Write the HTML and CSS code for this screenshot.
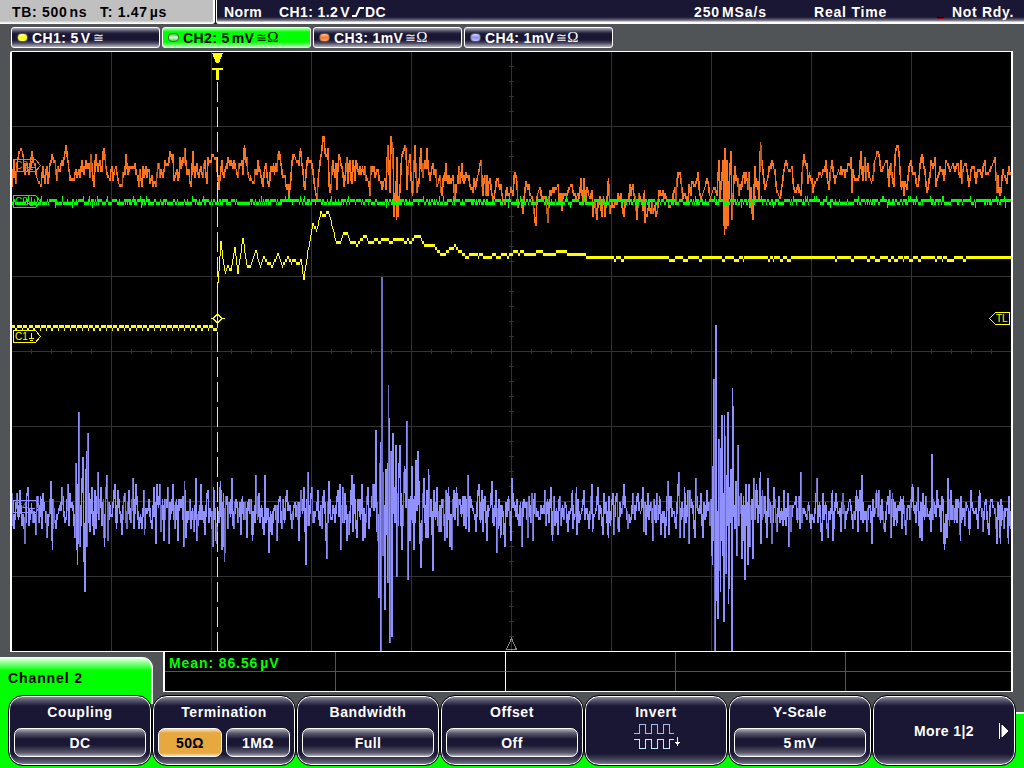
FILE: index.html
```
<!DOCTYPE html>
<html lang="en">

<head>
    <meta charset="UTF-8">
    <meta name="viewport" content="width=device-width, initial-scale=1.0">
    <title>Oscilloscope</title>
    <link rel="stylesheet" href="styles.css">
</head>

<body>

    <header class="status">
        <div class="timebase">
            <span class="tb">TB: 500<i></i>ns</span>
            <span class="tpos">T: 1.47<i></i>µs</span>
        </div>
        <div class="trigger">
            <span class="mode">Norm</span>
            <span class="source">CH1: 1.2<i></i>V</span>
            <svg class="edge" width="13" height="12" viewBox="0 0 13 12"><path d="M0 10H4L7.5 2H12" /></svg>
            <span class="dc">DC</span>
            <span class="rate">250<i></i>MSa/s</span>
            <span class="acq">Real Time</span>
            <span class="led"></span>
            <span class="state">Not Rdy.</span>
        </div>
    </header>

    <nav class="channels">
        <div class="channel"><b class="dot yellow"></b><span>CH1: 5<i></i>V</span><em>≅</em></div>
        <div class="channel active"><b class="dot green"></b><span>CH2: 5<i></i>mV</span><em>≅</em><em class="ohm">Ω</em></div>
        <div class="channel"><b class="dot orange"></b><span>CH3: 1mV</span><em>≅</em><em class="ohm">Ω</em></div>
        <div class="channel"><b class="dot violet"></b><span>CH4: 1mV</span><em>≅</em><em class="ohm">Ω</em></div>
    </nav>

    <main class="screen">
        <svg class="plot" width="999" height="599" viewBox="12 52 999 599">
            <path id="grid" class="grid" />
            <path class="ref" d="M511.5 638.5L506.5 649.5H516.5Z" />
            <path id="ch4" class="ch4" />
            <path id="ch4dim" class="ch4 dim" />
            <path id="ch3" class="ch3" />
            <path id="ch3dim" class="ch3 dim" />
            <path id="ch2" class="ch2" />
            <path id="ch1" class="ch1" />

            <!-- trigger position -->
            <path class="cursor" d="M217.5 82V651" />
            <path class="fill1" d="M212 53H223L219 63H216ZM212 68H223V70H219V80H216V70H212Z" />
            <path class="mark1" d="M210.5 318.5H213L217.5 314L222 318.5L217.5 323L213 318.5M222 318.5H225" />

            <!-- channel markers -->
            <g class="mark3">
                <path d="M13.5 159.5H35.5L40.5 165.5L35.5 171.5H13.5Z" />
                <text x="15" y="169">C3</text>
                <path d="M31.5 161V167M28 167.5H35M30 169.5H33" />
            </g>
            <g class="mark2">
                <path d="M13.5 195.5H35.5L40.5 201.5L35.5 207.5H13.5Z" />
                <text x="15" y="205">C2</text>
                <path d="M31.5 197V203M28 203.5H35M30 205.5H33" />
            </g>
            <g class="mark1">
                <path d="M13.5 330.5H35.5L40.5 336.5L35.5 342.5H13.5Z" />
                <text x="15" y="340">C1</text>
                <path d="M31.5 333V338M29 338.5H34M30 340.5H33" />
            </g>
            <g class="mark4">
                <path d="M13.5 500.5H35.5L40.5 506.5L35.5 512.5H13.5Z" />
                <text x="15" y="510">C4</text>
                <path d="M31.5 503V508M28 508.5H35M30 510.5H33" />
            </g>
            <g class="mark1">
                <path d="M1009.5 312.5H995.5L989.5 318.5L995.5 324.5H1009.5Z" />
                <text x="996" y="322">TL</text>
            </g>
        </svg>
    </main>

    <section class="info">
        <div class="tab">Channel 2</div>
        <div class="measure">
            <div>Mean: 86.56<i></i>µV</div><div></div><div></div><div></div><div></div>
            <div></div><div></div><div></div><div></div><div></div>
        </div>
    </section>

    <footer class="softkeys">
        <div class="key">
            <span class="title">Coupling</span>
            <div class="values"><span class="value">DC</span></div>
        </div>
        <div class="key">
            <span class="title">Termination</span>
            <div class="values"><span class="value on">50Ω</span><span class="value">1MΩ</span></div>
        </div>
        <div class="key">
            <span class="title">Bandwidth</span>
            <div class="values"><span class="value">Full</span></div>
        </div>
        <div class="key">
            <span class="title">Offset</span>
            <div class="values"><span class="value">Off</span></div>
        </div>
        <div class="key">
            <span class="title">Invert</span>
            <svg class="invert" width="48" height="26" viewBox="0 0 48 26">
                <path class="wave" d="M0 9.5H5.5V.5H11.5V9.5H17.5V.5H23.5V9.5H29.5V.5H35.5V9.5H40" />
                <path class="wave low" d="M0 15.5H5.5V24.5H11.5V15.5H17.5V24.5H23.5V15.5H29.5V24.5H35.5V15.5H40" />
                <path class="arrow" d="M43.5 13V22M41 18.5H46M42 19.5H45" />
            </svg>
        </div>
        <div class="key">
            <span class="title">Y-Scale</span>
            <div class="values"><span class="value">5<i></i>mV</span></div>
        </div>
        <div class="key more">
            <span>More 1|2</span>
            <svg width="10" height="16" viewBox="0 0 10 16"><path d="M.5 0V16" /><path class="tri" d="M3 2L9 8L3 14Z" /></svg>
        </div>
    </footer>

    <script src="script.js"></script>

</body>

</html>
```
FILE: styles.css
```
* {
    box-sizing: border-box;
}

body {
    margin: 0;
    width: 1024px;
    height: 768px;
    overflow: hidden;
    background: #505457;
    color: #fff;
    font-family: "Liberation Sans", Arial, sans-serif;
    font-size: 14px;
    font-weight: bold;
    letter-spacing: 0.4px;
    white-space: nowrap;
}

/* narrow gap between number and unit */
i {
    display: inline-block;
    width: 2px;
}

/* status line */
.status {
    display: flex;
    height: 24px;
    line-height: 24px;
    background: #1a1734;
}

.timebase {
    display: flex;
    width: 215px;
    padding-left: 12px;
    background: linear-gradient(#c0c0c0 21px, #ddd 22px, #fff 23px);
    border-right: 2px solid #fff;
    border-bottom-right-radius: 3px;
    color: #000;
    letter-spacing: 0.7px;
}

.tb {
    width: 88px;
}

.trigger {
    display: flex;
    flex: 1;
    margin-left: 1px;
    padding-left: 7px;
    border-left: 1px solid #fff;
    border-bottom-left-radius: 3px;
    background: linear-gradient(#1a1734 17px, #4a4760 19px, #908e9e 21px, #fff 22px);
}

.mode {
    width: 55px;
}

.source {
    width: 73px;
}

.edge {
    margin-top: 6px;
    fill: none;
    stroke: #fff;
    stroke-width: 2;
}

.dc {
    width: 329px;
}

.rate {
    width: 120px;
    letter-spacing: 0.9px;
}

.acq {
    width: 123px;
    letter-spacing: 0.8px;
}

.led {
    width: 7px;
    height: 2px;
    margin: 17px 8px 0 0;
    background: #a00010;
    border-top: 1px solid #000;
}

.state {
    letter-spacing: 0.7px;
}

/* channel buttons */
.channels {
    display: flex;
    gap: 2px;
    height: 27px;
    padding: 3px 0 0 11px;
}

.channel {
    display: flex;
    align-items: center;
    width: 149px;
    height: 21px;
    padding-left: 5px;
    border: 1px solid #fff;
    border-radius: 3px;
    background: linear-gradient(#aaa9b5, #3b3850 4px, #1a1734 6px, #1a1734 12px, #4a4760 15px, #b5b4c0);
}

.channel.active {
    background: linear-gradient(#b5ffb5, #0f0 4px, #0f0 14px, #b5ffb5);
    color: #000;
}

.channel em {
    margin-left: 2px;
    font: 13px "Liberation Serif", "DejaVu Serif", serif;
    letter-spacing: 0;
}

.channel .ohm {
    margin-left: 0;
    font-size: 15px;
}

.dot {
    width: 11px;
    height: 9px;
    margin-right: 4px;
    border: 1px solid #555;
    border-radius: 4px;
}

.yellow {
    background: linear-gradient(#ffffb0, #ff0 50%, #ffff60);
}

.green {
    background: linear-gradient(#40c040, #d8ffd8 50%, #40d040);
}

.orange {
    background: linear-gradient(#ffc0a0, #ff7820 50%, #ffa070);
}

.violet {
    background: linear-gradient(#d0d0ff, #9090ff 50%, #c0c0ff);
}

/* plot */
.screen {
    width: 1003px;
    height: 601px;
    margin-left: 10px;
    border: solid #fff;
    border-width: 1px 2px;
    border-top-left-radius: 2px;
    background: #000;
}

.plot {
    display: block;
    fill: none;
    shape-rendering: crispEdges;
}

.plot text {
    font-size: 10px;
    font-weight: normal;
    letter-spacing: 0;
    stroke: none;
}

.grid {
    stroke: #333;
}

.ref {
    stroke: #888;
}

.ch1 {
    stroke: #ff0;
}

.ch2 {
    stroke: #0f0;
}

.ch3 {
    stroke: #ff741a;
}

.ch3.dim {
    stroke: #c05a18;
}

.ch4 {
    stroke: #9090ff;
}

.ch4.dim {
    stroke: #6e6ec4;
}

.cursor {
    stroke: #ff0;
    stroke-dasharray: 20 5;
}

.fill1 {
    fill: #ff0;
}

.mark1 {
    stroke: #ff0;
}

.mark1 text {
    fill: #ff0;
}

.mark2 {
    stroke: #0f0;
}

.mark2 text {
    fill: #0f0;
}

.mark3 {
    stroke: #ff741a;
}

.mark3 text {
    fill: #ff741a;
}

.mark4 {
    stroke: #9090ff;
}

.mark4 text {
    fill: #9090ff;
}

/* menu name and measurement */
.info {
    display: flex;
    align-items: flex-end;
    gap: 10px;
    height: 40px;
    letter-spacing: 0.9px;
}

.tab {
    width: 153px;
    height: 35px;
    padding-left: 8px;
    line-height: 43px;
    border-right: 2px solid #fff;
    border-top-right-radius: 11px;
    background: linear-gradient(#fff, #b0ffb0 4px, #0f0 14px);
    color: #000;
}

.measure {
    display: grid;
    grid-template-columns: 171px 170px 170px 170px 1fr;
    grid-template-rows: 20px 19px;
    width: 850px;
    height: 40px;
    border: solid #fff;
    border-width: 0 2px 1px;
    background: #000;
    color: #0f0;
    line-height: 22px;
}

.measure div {
    padding-left: 4px;
    border-right: 1px solid #555;
}

.measure div:nth-child(-n+5) {
    border-bottom: 1px solid #555;
}

.measure div:nth-child(5n+2) {
    border-right-color: #fff;
}

.measure div:nth-child(5n) {
    border-right: 0;
}

/* softkeys */
.softkeys {
    display: flex;
    height: 76px;
    padding: 3px 0 0 8px;
    background:
        linear-gradient(#0f0, #0f0) 0 0 / 151px 100% no-repeat,
        linear-gradient(#fff, #fff) 151px 0 / 2px 12px no-repeat,
        linear-gradient(#0f0, #0f0) 0 100% / 100% 13px no-repeat,
        linear-gradient(#fff 2px, #0f0 2px) 1012px 20px / 12px 56px no-repeat;
}

.key {
    display: flex;
    flex-direction: column;
    align-items: center;
    width: 144px;
    height: 71px;
    padding-top: 6px;
    border: 1px solid #000;
    border-radius: 15px;
    box-shadow: inset 0 0 0 1px #fff;
    background: linear-gradient(#9a99a8, #5d5b70 4px, #1a1734 10px, #1a1734 58px, #5d5b70 66px, #9a99a8);
}

.title {
    height: 20px;
    line-height: 20px;
    letter-spacing: 0.6px;
}

.values {
    display: flex;
    gap: 4px;
    width: 132px;
    margin-top: 6px;
}

.value {
    flex: 1;
    height: 29px;
    line-height: 29px;
    border: 1px solid #fff;
    border-radius: 7px;
    background: linear-gradient(#b0afbc, #5d5b70 4px, #1a1734 10px, #1a1734 16px, #5d5b70 24px, #b0afbc);
    text-align: center;
}

.value.on {
    background: linear-gradient(#f8e0b8, #e8a840 4px, #e8a840 24px, #f8e0b8);
    color: #000;
}

.invert {
    margin: 2px 0 0 4px;
    fill: none;
    shape-rendering: crispEdges;
}

.wave {
    stroke: #a8b8f0;
}

.wave.low {
    stroke: #c0f0ff;
}

.arrow {
    stroke: #fff;
}

.more {
    flex-direction: row;
    justify-content: flex-end;
    gap: 25px;
    padding: 1px 6px 0 0;
}

.more svg {
    fill: none;
    stroke: #fff;
}

.more .tri {
    fill: #fff;
}
```
FILE: script.js
```
// Turning points of the traces, x then y, in screen pixels.
var ch4Points = [
    12,493, 14,528, 17,493, 20,490, 22,526, 25,543, 28,487, 33,523, 36,535, 38,496, 42,529, 43,493, 47,537, 51,481,
    52.5,550, 53,499, 56,528, 62,487, 65,523, 68,484, 69,525, 70,493, 75,538, 76,463, 77.5,565, 79,412, 80,547,
    83,457, 84,550, 85,592, 86.5,451, 87,547, 88,433, 90,531, 92,487, 94,535, 95,490, 96,528, 98,472, 99,519,
    101,487, 104.5,547, 107,475, 108,541, 112,517, 115,484, 116.5,529, 118,490, 122,535, 125,493, 127,528, 129,490,
    131,523, 133,478, 134,528, 136,484, 139,529, 142,528, 144,490, 144.5,534, 149,499, 152,528, 154,487, 156,544,
    157,484, 160,484, 161,532, 164,541, 168,487, 169,544, 173,484, 175,529, 178,541, 180,499, 184,547, 184.5,481,
    186,538, 190,499, 191,529, 194,532, 196,478, 197,541, 201,484, 205,535, 208,490, 213,547, 213.5,487, 216.5,544,
    220.5,481, 222,550, 223.5,493, 224.5,562, 227,496, 228,528, 232,478, 234,528, 237,502, 241,535, 245,502, 247,537,
    249,500, 252.5,541, 256,475, 259,494, 264,535, 265,475, 267,510, 269,553, 272,534, 277,541, 280,496, 282,529,
    287,490, 292,528, 295,502, 299,541, 301,490, 304,487, 306,565, 308,472, 309,526, 312,487, 314,523, 318,490,
    320,526, 322,529, 324,490, 327,559, 329,481, 332,519, 335,523, 338,490, 340,484, 341,550, 343,487, 344,523,
    345,493, 347,541, 349,535, 352,475, 353,532, 354,484, 357,538, 359,499, 362,484, 363,541, 365,538, 368,487,
    369,529, 373,484, 375,506, 376,430, 377,532, 379,598, 380.5,442, 381,651, 382,277, 383,556, 385,610, 386,469,
    388,583, 388.5,385, 390,643, 391,451, 392,637, 393,433, 395,523, 396,445, 397,577, 399,469, 400,445, 402,550,
    404.5,466, 407,421, 408,580, 410,541, 412,466, 414,550, 416,460, 418,451, 421,568, 424,478, 426,538, 427,490,
    428,538, 428.5,469, 430,517, 431,500, 433,571, 434,490, 437,487, 439,532, 441,532, 443,499, 445,541, 446,490,
    447,538, 448.5,487, 450,547, 452,550, 454,490, 456.5,487, 458,526, 460,499, 463,496, 465,496, 466,529, 468,475,
    469,532, 471,499, 476,532, 479,484, 482,490, 483,532, 485,496, 487,541, 488,505, 492,481, 494,526, 496,490,
    497,553, 500,505, 500.5,538, 502,506, 505,547, 506,502, 511,541, 512,478, 517,499, 519,526, 522,547, 524,499,
    528,538, 532,493, 533,541, 535,493, 540,520, 545,490, 546,526, 549,523, 551,487, 552.5,541, 554,496, 558,535,
    560,496, 565,502, 568,532, 572.5,490, 573,529, 576.5,487, 577,535, 584,490, 585,520, 589,529, 592,484,
    592.5,532, 598,487, 603,535, 604,493, 608.5,538, 609,496, 613,493, 614,535, 617,493, 619,532, 624,484,
    628,529, 633,493, 635,520, 638,493, 643,487, 644,532, 646,535, 648,493, 653,541, 657,493, 661,535, 665,538,
    668,481, 669,535, 671,496, 676,528, 679,472, 680,538, 683,510, 684,538, 684.5,487, 688,490, 689,544, 690,490,
    695,538, 696,478, 701,493, 703,538, 707,490, 709,502, 711,500, 712.5,565, 714,379, 715,651, 716,325, 717,592,
    718,619, 719,439, 720.5,592, 721,463, 722,415, 724,622, 724.5,415, 726,574, 728,412, 728.5,604, 731,469,
    732,651, 732.5,388, 735,529, 736,481, 737,556, 738,445, 739,526, 741,493, 742,559, 743.5,495, 745,580,
    746,484, 748,565, 749,484, 750,547, 752,500, 753,559, 754,478, 756.5,484, 758,523, 760.5,472, 761,544,
    762.5,490, 767,538, 768,478, 772,544, 774,487, 777,532, 779,496, 784,490, 786,526, 788,493, 789,547,
    791,532, 796,496, 799,496, 800,529, 801,472, 802,523, 807,520, 811,529, 816,499, 817,478, 822,541,
    823,493, 828,538, 832.5,490, 833,541, 836,493, 841,532, 843,493, 845,529, 850,499, 853,529, 856.5,490,
    858,532, 860,490, 862,475, 867,532, 870,505, 872,543, 873,499, 876.5,490, 879,490, 882,499, 885,532, 888,496,
    890,490, 891,538, 892.5,493, 898,505, 902,529, 906,535, 909,505, 912.5,484, 916,523, 918,487, 920,538,
    922,541, 923,493, 926,496, 931,532, 932,454, 933,520, 937,490, 941,532, 943,500, 944.5,550, 947,538, 948,478,
    951,490, 957,523, 960.5,541, 961,496, 965,526, 969.5,535, 971,490, 978,529, 979.5,490, 983,532, 986,499,
    989,535, 992,499, 997,544, 1000.5,544, 1001,499, 1004,529, 1008.5,544, 1009,496, 1011,530
];

var ch3Points = [
    12,187, 14,160, 16,184, 18,158, 21,148, 23,154, 25,175, 27,163, 29,176, 32,152, 35,163, 38,181, 41,187, 43,166,
    45,184, 47,166, 48,184, 51,160, 55,159, 57,181, 62,160, 63,166, 66,145, 69,170, 74,182, 76,170, 80,178, 82,160,
    84,175, 86,160, 90,178, 91,154, 94,187, 96,154, 98,172, 100,160, 102,172, 104,148, 107,175, 110,181, 112,166,
    113,181, 116,166, 119,184, 122,187, 126,154, 128,175, 131,169, 135,164, 139,187, 140,170, 142,187, 143,166,
    147,178, 149,169, 153,187, 157,176, 159,164, 160,178, 164,172, 169,160, 173,154, 174,182, 177,169, 179,178,
    185,148, 187,175, 189,170, 191,187, 193,151, 195,178, 197,164, 199,178, 201,166, 203,178, 205,160, 207,184,
    208,157, 211,164, 213,154, 216,158, 219,190, 222,160, 224,178, 228,157, 230,167, 234,160, 238,178, 242,160,
    243,175, 244.5,145, 248,175, 254,184, 258,160, 260,170, 263,187, 266,164, 269,187, 271,166, 277,172, 279,151,
    282,173, 285,176, 289,198, 292,163, 295,157, 299,166, 300.5,148, 303,170, 305,190, 308,157, 311,160, 314,180,
    317,198, 320,163, 322,148, 324,136, 326,158, 328,148, 329,184, 331,190, 333,160, 335,178, 336,163, 337,190,
    338,166, 340,157, 342,166, 344,187, 347,157, 348,184, 350,160, 352,184, 353,160, 355,181, 356,160, 359,176,
    365,166, 370,196, 371,166, 375,178, 378,169, 382,190, 385,178, 386,190, 388,145, 390,193, 391,136, 393,148,
    394,217, 396,181, 396.5,219, 397,157, 398,217, 400,190, 402,154, 405,145, 406,148, 407,190, 408,170, 410,154,
    411,178, 412.5,196, 415,145, 417,193, 419,184, 421,148, 423,178, 427,148, 430,181, 433,163, 437,187, 440,175,
    442,196, 446,163, 448,184, 453,175, 455,202, 459,166, 460,184, 462,163, 464,184, 466,172, 470,187, 472,187,
    473,193, 478,175, 481,160, 483,196, 485,175, 486,196, 487,175, 488,196, 490,178, 493,202, 496,184, 498,178,
    502,196, 505,204, 507,187, 509,196, 511,187, 513,196, 514.5,172, 517,181, 518,208, 521,200, 523,213, 526,181,
    530,196, 533,198, 536,226, 537,196, 540,187, 542,198, 546,200, 548,222, 550,190, 554,193, 556,187, 558,184,
    562,211, 563,193, 567,196, 570,187, 572,184, 575,193, 579,200, 581,178, 583,202, 584,178, 586,204, 587,187,
    590,198, 592,190, 593,217, 595,200, 597,220, 599,200, 600,196, 602,217, 604,200, 605,217, 607,200, 608.5,178,
    610,214, 612,200, 614,208, 618,193, 622,200, 624,217, 626,200, 629,198, 630,184, 631,196, 633,184, 635,198,
    637,219, 639,193, 642,200, 643,210, 644.5,190, 645,223, 647,216, 649,200, 651,214, 652,200, 653,213, 655,204,
    657,214, 658,204, 660,190, 664,200, 668,198, 670,208, 672,204, 675,187, 676,205, 677,181, 680,172, 683,200,
    685,193, 688,200, 692,181, 694,187, 697,181, 698,172, 701,199, 703,193, 706,184, 708,182, 711,196, 714,187,
    717,196, 719,160, 720,202, 722,178, 723,160, 724.5,235, 725,148, 726,230, 727,160, 728,226, 729,187, 731,151,
    732,220, 735,166, 739,196, 744,172, 745,184, 746,172, 748,190, 749,172, 750,208, 751,187, 753,220, 755,166,
    759,199, 760.5,142, 762,163, 765,190, 768,178, 772,160, 775,170, 777,193, 780,200, 783,178, 786,160, 789,172,
    792,166, 793,181, 796,193, 798,184, 801,196, 804,154, 807,164, 813,193, 815,181, 818,178, 822,175, 826,160,
    829,190, 832,160, 835,183, 841,166, 845,178, 847,172, 851,157, 852,193, 853,169, 855,181, 859,178, 861,151,
    863,181, 865,157, 866,181, 868,163, 870,178, 873,180, 876,157, 879,154, 882,172, 887,160, 889,187, 891,163,
    894,187, 895,157, 897,145, 899,151, 900,172, 904,195, 908,178, 911,160, 912,170, 915,172, 918,187, 920,166,
    922,154, 925,172, 927,193, 928,190, 930,175, 935,157, 936,187, 940,166, 944,181, 946,160, 950,172, 953,163,
    955,172, 958,163, 960,178, 961,160, 962,184, 964,166, 966,163, 969,187, 971,170, 974,166, 976,184, 978,170,
    980,169, 982,178, 985,160, 986,175, 989,172, 992,166, 995,157, 997,193, 998,175, 999,190, 1001,190, 1003,169,
    1005,175, 1007,184, 1009,166, 1011,176
];

var ch1Points = [
    217,328, 217.5,290, 219,271, 221,241, 223,258, 225,272, 228,265, 231,270, 235,247, 238,273, 243,238, 247,266,
    251,266, 256,250, 260,266, 264,256, 268,262, 273,265, 278,253, 282,265, 288,256, 291,262, 294,259, 298,263,
    301,260, 304,279, 308,251, 313,224, 317,230, 321,212, 325,214, 328,211, 333,228, 336,241, 341,241, 344,232,
    347,233, 350,241, 355,241, 357,245, 361,238, 366,235, 368,241, 372,241, 376,238, 379,241, 383,238, 388,238,
    390,241, 396,238, 402,238, 405,241, 408,239, 411,241, 415,236, 420,235, 424,244, 434,244, 437,250, 444,254,
    450,248, 455,245, 459,250, 464,253
];

var seed = 7;

function random() {
    seed = (seed * 16807) % 2147483647;
    return seed / 2147483647;
}

// The acquisition has 3 px vertical resolution
function snap(y) {
    return Math.round((y - 1) / 3) * 3 + 1;
}

// Fill the wider gaps with noise samples, every second one on the other side
function addNoise(points, center, amplitude) {
    var out = [];
    for (var i = 0; i < points.length - 2; i += 2) {
        var x = points[i];
        var next = points[i + 2];
        out.push(x, points[i + 1]);
        var count = Math.round((next - x) / 1.25) - 1;
        var base = center || (points[i + 1] + points[i + 3]) / 2;
        var side = points[i + 1] > base ? -1 : 1;
        for (var k = 1; k <= count; k++) {
            out.push(x + (next - x) * k / (count + 1), base + side * amplitude * (random() * 1.3 - 0.3));
            side = -side;
        }
    }
    out.push(points[points.length - 2], points[points.length - 1]);
    return out;
}

function sampleAt(points, x) {
    var i = 0;
    while (i < points.length - 4 && points[i + 2] < x) {
        i += 2;
    }
    var t = (x - points[i]) / (points[i + 2] - points[i]);
    t = Math.max(0, Math.min(1, t));
    return points[i + 1] + (points[i + 3] - points[i + 1]) * t;
}

// One vertical bar per pixel column
function drawTrace(id, points, spread) {
    var bright = "";
    var dim = "";
    for (var x = 12; x < 1011; x++) {
        var a = x - spread;
        var b = x + 1 + spread;
        var values = [sampleAt(points, a), sampleAt(points, b)];
        for (var i = 0; i < points.length; i += 2) {
            if (points[i] >= a && points[i] <= b) {
                values.push(points[i + 1]);
            }
        }
        var top = snap(Math.min.apply(null, values));
        var bottom = Math.max(top + 3, snap(Math.max.apply(null, values)));
        var bar = "M" + (x + 0.5) + " " + top + "V" + bottom;
        if (spread > 0 && bottom - top > 12 && random() < 0.2) {
            dim += bar;
        } else {
            bright += bar;
        }
    }
    document.getElementById(id).setAttribute("d", bright);
    if (dim) {
        document.getElementById(id + "dim").setAttribute("d", dim);
    }
}

// Quantisation jitter between two neighbouring levels
function jitter(points, from, to, level, step, share) {
    var x = from;
    while (x < to) {
        var width = 2 + Math.floor(random() * 3);
        var y = random() < share ? level + step : level;
        points.push(x, y, x + width - 0.01, y);
        x += width;
    }
}

function drawGrid() {
    var d = "";
    for (var x = 111; x < 1011; x += 100) {
        d += "M" + (x + 0.5) + " 52V651";
    }
    for (var y = 126; y < 651; y += 75) {
        d += "M12 " + (y + 0.5) + "H1011";
    }
    for (x = 31; x < 1011; x += 20) {
        d += "M" + (x + 0.5) + " 349V354";
    }
    for (y = 66; y < 651; y += 15) {
        d += "M509 " + (y + 0.5) + "H514";
    }
    document.getElementById("grid").setAttribute("d", d);
}

// ch2 toggles between two levels, with a few taller bars
function drawCh2() {
    var d = "";
    var level = 199;
    for (var x = 12; x < 1011; x++) {
        if (random() < 0.32) {
            level = level === 199 ? 202 : 199;
        }
        var r = random();
        var top = r < 0.05 ? 196 : r < 0.2 ? 199 : level;
        var bottom = r > 0.98 ? 208 : r < 0.05 ? 202 : r < 0.2 ? 205 : level + 3;
        d += "M" + (x + 0.5) + " " + top + "V" + bottom;
    }
    document.getElementById("ch2").setAttribute("d", d);
}

var ch1 = [];
for (var x = 12; x < 216; x += 6) {
    var on = 3 + Math.floor(random() * 2);
    ch1.push(x, 325, x + on - 0.01, 325, x + on, 328, x + 5.99, 328);
}
ch1 = ch1.concat(ch1Points);
jitter(ch1, 465, 510, 253, 3, 0.35);
jitter(ch1, 510, 583, 250, 3, 0.6);
jitter(ch1, 583, 860, 256, 3, 0.2);
jitter(ch1, 860, 980, 256, 3, 0.4);
ch1.push(980, 256, 1011, 256);

drawGrid();
drawTrace("ch4", addNoise(ch4Points, 511, 15), 0.3);
drawTrace("ch3", addNoise(ch3Points, 0, 7), 0.3);
drawTrace("ch1", ch1, 0);
drawCh2();
```
